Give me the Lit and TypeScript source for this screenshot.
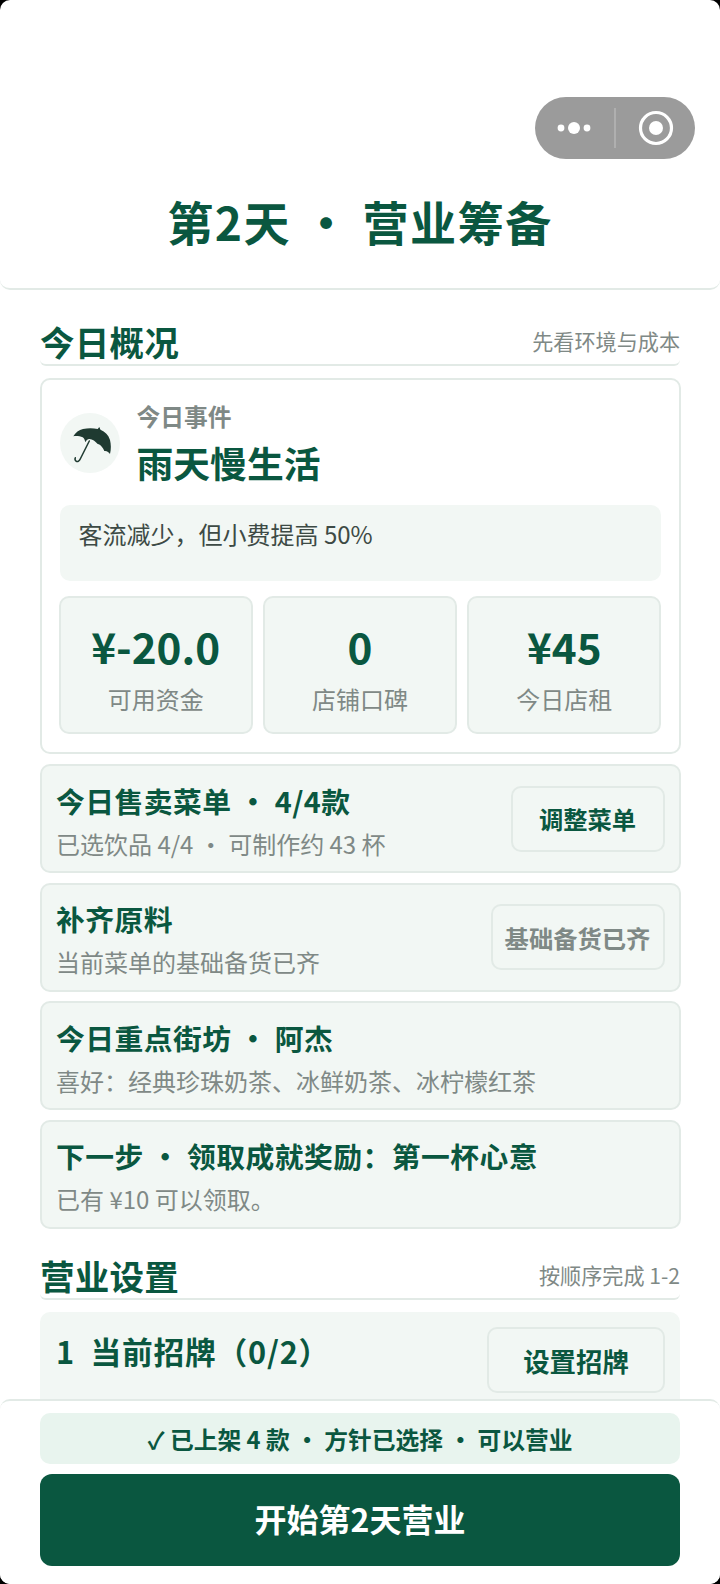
import { LitElement, html, css } from "lit";
import { customElement } from "lit/decorators.js";

@customElement("app-root")
export class AppRoot extends LitElement {
  static styles = css`
    :host {
      display: block;
      width: 720px;
      height: 1584px;
      background: #000;
      font-family: "Noto Sans CJK SC", "Noto Sans", sans-serif;
      color: #0a5740;
    }
    .page {
      position: relative;
      height: 1584px;
      overflow: hidden;
      background: #fff;
      border-radius: 10px;
    }
    .header {
      box-sizing: border-box;
      height: 290px;
      display: flex;
      align-items: flex-end;
      justify-content: center;
      padding-bottom: 35px;
      border-bottom: 2px solid #e2eae6;
      border-radius: 0 0 10px 10px;
    }
    .title {
      font-size: 46.08px;
      line-height: 64px;
      font-weight: 700;
      white-space: pre;
      letter-spacing: 1.5px;
    }
    .capsule {
      position: absolute;
      left: 535px;
      top: 97px;
      width: 160px;
      height: 62px;
      border-radius: 31px;
      background: #9b9b9b;
    }
    .capsule svg { display: block; }
    main { padding: 0 40px; }
    .head {
      box-sizing: border-box;
      height: 48px;
      margin-top: 28px;
      display: flex;
      align-items: center;
      justify-content: space-between;
      border-bottom: 2px solid #e2eae6;
      border-radius: 0 0 6px 6px;
    }
    .head.second { margin-top: 23.5px; }
    .head h2 {
      margin: 0;
      font-size: 34.56px;
      line-height: 46px;
      font-weight: 700;
      letter-spacing: 0.2px;
    }
    .head span { font-size: 21.12px; color: #7f8986; }
    .stack { display: flex; flex-direction: column; gap: 9.8px; margin: 12px -0.5px 0; }
    .card {
      box-sizing: border-box;
      height: 376.4px;
      border: 2px solid #e2eae6;
      border-radius: 10px;
      padding: 19px 18px;
    }
    .event { display: flex; align-items: center; gap: 17px; height: 93px; margin-top: -3px; }
    .event-text { padding-top: 5px; }
    .icon {
      width: 60px;
      height: 60px;
      border-radius: 50%;
      background: #f2f7f4;
    }
    .icon svg { display: block; }
    .event-tag { font-size: 23.76px; line-height: 30px; font-weight: 700; color: #7f8986; }
    .event-name { font-size: 36.8px; line-height: 54px; font-weight: 700; margin-top: 4px; }
    .note {
      box-sizing: border-box;
      height: 76px;
      margin-top: 16px;
      padding: 11px 19px;
      border-radius: 10px;
      background: #f2f7f4;
      font-size: 24px;
      line-height: 36px;
      color: #3d4a45;
    }
    .stats { display: grid; grid-template-columns: repeat(3, 1fr); gap: 10px; margin: 15px -1px 0; }
    .stat {
      box-sizing: border-box;
      height: 138px;
      border: 2px solid #e2eae6;
      border-radius: 10px;
      background: #f2f7f4;
      text-align: center;
      padding-top: 19px;
    }
    .val { font-size: 42.24px; line-height: 58px; font-weight: 700; }
    .lab { font-size: 24px; line-height: 36px; color: #7f8986; margin-top: 6px; }
    .row {
      box-sizing: border-box;
      height: 108.8px;
      display: flex;
      align-items: center;
      justify-content: space-between;
      border: 2px solid #e2eae6;
      border-radius: 10px;
      background: #f2f7f4;
      padding: 0 14px 0 14.5px;
    }
    .txt { padding-top: 4px; }
    .t { font-size: 28.8px; line-height: 42px; font-weight: 700; white-space: pre; letter-spacing: 0.45px; }
    .s { font-size: 24px; line-height: 36px; color: #7f8986; margin-top: 4px; white-space: pre; }
    .btn {
      box-sizing: border-box;
      height: 66px;
      display: flex;
      align-items: center;
      justify-content: center;
      border: 2px solid #e2eae6;
      border-radius: 10px;
      font-size: 24.3px;
      font-weight: 700;
    }
    .btn.menu { width: 154px; }
    .btn.off { width: 174px; color: #7f8986; }
    .sign {
      box-sizing: border-box;
      height: 110px;
      margin-top: 12px;
      display: flex;
      justify-content: space-between;
      align-items: flex-start;
      border-radius: 10px;
      background: #f2f7f4;
      padding: 15px 15px 0 16px;
    }
    .sign .t { font-size: 30.72px; line-height: 54px; margin-top: -3px; letter-spacing: 0.8px; }
    .btn.set { width: 178px; height: 66px; font-size: 26.4px; }
    .footer {
      box-sizing: border-box;
      position: absolute;
      left: 0;
      right: 0;
      bottom: 0;
      height: 185px;
      padding: 12px 40px 16px;
      background: #fff;
      border-top: 2px solid #e2eae6;
      border-radius: 10px 10px 0 0;
      display: flex;
      flex-direction: column;
      gap: 10px;
    }
    .ok {
      box-sizing: border-box;
      height: 51px;
      border-radius: 10px;
      background: #e8f4ee;
      display: flex;
      align-items: center;
      justify-content: center;
      font-size: 23.76px;
      font-weight: 700;
      white-space: pre;
    }
    .go {
      box-sizing: border-box;
      height: 92px;
      padding-bottom: 4px;
      border-radius: 12px;
      background: #0a5740;
      color: #fff;
      display: flex;
      align-items: center;
      justify-content: center;
      font-size: 32px;
      font-weight: 700;
    }
  `;

  render() {
    return html`
      <div class="page">
        <header class="header"><div class="title">第2天 · 营业筹备</div></header>
        <div class="capsule">
          <svg width="160" height="62" viewBox="0 0 160 62">
            <circle cx="26" cy="31" r="3.4" fill="#fff" />
            <circle cx="39" cy="31" r="6" fill="#fff" />
            <circle cx="52" cy="31" r="3.4" fill="#fff" />
            <rect x="79.5" y="11" width="1" height="40" fill="#c4c4c4" />
            <circle cx="121" cy="31" r="15.5" fill="none" stroke="#fff" stroke-width="3.2" />
            <circle cx="121" cy="31" r="7" fill="#fff" />
          </svg>
        </div>
        <main>
          <div class="head"><h2>今日概况</h2><span>先看环境与成本</span></div>
          <div class="stack">
            <section class="card">
              <div class="event">
                <div class="icon">
                  <svg width="60" height="60" viewBox="0 0 60 60">
                    <path d="M13.300 23.300 C15.500 19.500 19 17 23 16 C28 15 33 15 37.700 16 L39.300 14 L40.500 16.700 C45 18.500 48.500 22 50 27 C51 31 51.300 36 50 41 C49 39 46.500 37.500 44.300 38 C43 34.500 40.500 31.500 37.700 31 C35.500 28.500 32.500 26 29.300 26 C27.500 26.200 26.200 27.500 25.300 29.300 C24.800 26.800 24 25 22.700 24.300 C20 23.200 16.500 22.800 13.300 23.300 Z" fill="#1f3a31" />
                    <path d="M29.300 28 L20.500 45.500 C19.500 48 17.700 49 16.300 48.300 C15 47.500 14.800 46 15.300 44.800" fill="none" stroke="#1f3a31" stroke-width="1.500" stroke-linecap="round" />
                  </svg>
                </div>
                <div class="event-text">
                  <div class="event-tag">今日事件</div>
                  <div class="event-name">雨天慢生活</div>
                </div>
              </div>
              <div class="note">客流减少，但小费提高 50%</div>
              <div class="stats">
                <div class="stat"><div class="val">¥-20.0</div><div class="lab">可用资金</div></div>
                <div class="stat"><div class="val">0</div><div class="lab">店铺口碑</div></div>
                <div class="stat"><div class="val">¥45</div><div class="lab">今日店租</div></div>
              </div>
            </section>
            <div class="row">
              <div class="txt"><div class="t">今日售卖菜单 · 4/4款</div><div class="s">已选饮品 4/4 · 可制作约 43 杯</div></div>
              <div class="btn menu">调整菜单</div>
            </div>
            <div class="row">
              <div class="txt"><div class="t">补齐原料</div><div class="s">当前菜单的基础备货已齐</div></div>
              <div class="btn off">基础备货已齐</div>
            </div>
            <div class="row">
              <div class="txt"><div class="t">今日重点街坊 · 阿杰</div><div class="s">喜好：经典珍珠奶茶、冰鲜奶茶、冰柠檬红茶</div></div>
            </div>
            <div class="row">
              <div class="txt"><div class="t">下一步 · 领取成就奖励：第一杯心意</div><div class="s">已有 ¥10 可以领取。</div></div>
            </div>
          </div>
          <div class="head second"><h2>营业设置</h2><span>按顺序完成 1-2</span></div>
          <div class="sign">
            <div class="t">1  当前招牌（0/2）</div>
            <div class="btn set">设置招牌</div>
          </div>
        </main>
        <footer class="footer">
          <div class="ok">✓ 已上架 4 款 · 方针已选择 · 可以营业</div>
          <div class="go">开始第2天营业</div>
        </footer>
      </div>
    `;
  }
}
